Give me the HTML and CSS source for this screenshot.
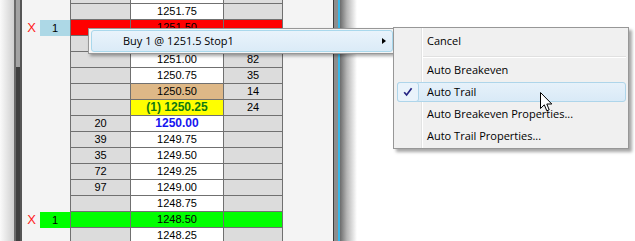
FILE: index.html
```html
<!DOCTYPE html>
<html>
<head>
<meta charset="utf-8">
<link rel="stylesheet" href="styles.css">
</head>
<body>
<div class="screen">
  <div class="lshadow"></div>
  <div class="lframe"><div class="lf lf-a"></div><div class="lf lf-b"></div><div class="lf lf-c"></div></div>
  <div class="panel">
    <div class="ladder">
      <div class="row"><span class="x"></span><span class="q"></span><span class="c c1"></span><span class="c c2"></span><span class="c c3"></span></div>
      <div class="row"><span class="x"></span><span class="q"></span><span class="c c1"></span><span class="c c2">1251.75</span><span class="c c3"></span></div>
      <div class="row red"><span class="x">X</span><span class="q q-blue">1</span><span class="c c1"></span><span class="c c2">1251.50</span><span class="c c3"></span></div>
      <div class="row"><span class="x"></span><span class="q"></span><span class="c c1"></span><span class="c c2"></span><span class="c c3"></span></div>
      <div class="row"><span class="x"></span><span class="q"></span><span class="c c1"></span><span class="c c2">1251.00</span><span class="c c3">82</span></div>
      <div class="row"><span class="x"></span><span class="q"></span><span class="c c1"></span><span class="c c2">1250.75</span><span class="c c3">35</span></div>
      <div class="row"><span class="x"></span><span class="q"></span><span class="c c1"></span><span class="c c2 tan">1250.50</span><span class="c c3">14</span></div>
      <div class="row"><span class="x"></span><span class="q"></span><span class="c c1"></span><span class="c c2 last">(1) 1250.25</span><span class="c c3">24</span></div>
      <div class="row"><span class="x"></span><span class="q"></span><span class="c c1">20</span><span class="c c2 cur">1250.00</span><span class="c c3"></span></div>
      <div class="row"><span class="x"></span><span class="q"></span><span class="c c1">39</span><span class="c c2">1249.75</span><span class="c c3"></span></div>
      <div class="row"><span class="x"></span><span class="q"></span><span class="c c1">35</span><span class="c c2">1249.50</span><span class="c c3"></span></div>
      <div class="row"><span class="x"></span><span class="q"></span><span class="c c1">72</span><span class="c c2">1249.25</span><span class="c c3"></span></div>
      <div class="row"><span class="x"></span><span class="q"></span><span class="c c1">97</span><span class="c c2">1249.00</span><span class="c c3"></span></div>
      <div class="row"><span class="x"></span><span class="q"></span><span class="c c1"></span><span class="c c2">1248.75</span><span class="c c3"></span></div>
      <div class="row green"><span class="x">X</span><span class="q q-green">1</span><span class="c c1"></span><span class="c c2">1248.50</span><span class="c c3"></span></div>
      <div class="row"><span class="x"></span><span class="q"></span><span class="c c1"></span><span class="c c2">1248.25</span><span class="c c3"></span></div>
    </div>
  </div>
  <div class="rframe"><div class="rf rf-a"></div><div class="rf rf-b"></div><div class="rf rf-c"></div></div>
  <div class="rshadow"></div>
  <div class="rest"></div>
</div>

<div class="menu1">
  <div class="m1-item"><span class="m1-text">Buy 1 @ 1251.5 Stop1</span><span class="arrow"></span></div>
</div>

<div class="menu2">
  <div class="m2-item"><span class="m2-text">Cancel</span></div>
  <div class="m2-sep"></div>
  <div class="m2-item"><span class="m2-text">Auto Breakeven</span></div>
  <div class="m2-item hot"><span class="check"><svg width="12" height="12" viewBox="0 0 12 12"><path d="M2.2 6.2 L4.6 9 L9.6 2.2" fill="none" stroke="#242482" stroke-width="1.7" stroke-linejoin="miter"/></svg></span><span class="m2-text">Auto Trail</span></div>
  <div class="m2-item"><span class="m2-text">Auto Breakeven Properties...</span></div>
  <div class="m2-item"><span class="m2-text">Auto Trail Properties...</span></div>
</div>

<svg class="cursor" width="14" height="22" viewBox="0 0 14 22"><path d="M0.5 0.5 L0.5 16.5 L4.3 12.8 L6.8 18.8 L9.2 17.8 L6.8 12 L11.8 12 Z" fill="#fff" stroke="#000" stroke-width="1" stroke-linejoin="miter"/></svg>
</body>
</html>
```

FILE: styles.css
```css
html, body {
  margin: 0;
  padding: 0;
  width: 635px;
  height: 241px;
  overflow: hidden;
  background: #fff;
}
body {
  position: relative;
  font-family: "Liberation Sans", Arial, sans-serif;
}
.screen {
  display: flex;
  height: 241px;
}
.lshadow {
  width: 14px;
  background: linear-gradient(to right, #fafafa, #cfcfcf);
}
.lframe {
  display: flex;
  width: 8px;
}
.lf-a { width: 2px; background: #6a6a6a; }
.lf-b { width: 4px; background: linear-gradient(#a3a3a3 0 67px, #3f3f3f 67px); }
.lf-c { width: 2px; background: #555; }

.panel {
  width: 311px;
  background: #f4f4f4;
  overflow: hidden;
}
.ladder {
  margin-top: -12px;
  display: flex;
  flex-direction: column;
}
.row {
  display: flex;
  height: 16px;
  font-size: 11px;
  line-height: 15px;
  color: #000;
}
.x {
  width: 18px;
  color: #ff1a1a;
  font-size: 13px;
  line-height: 16px;
  text-align: right;
  padding-right: 4px;
  box-sizing: border-box;
}
.q {
  width: 30px;
  text-align: center;
  line-height: 16px;
}
.q-blue { background: #add8e6; }
.q-green { background: #00ff00; }
.c {
  box-sizing: border-box;
  border-left: 1px solid #707070;
  border-bottom: 1px solid #707070;
  text-align: center;
  height: 16px;
}
.c1 { width: 60px; background: #dcdcdc; }
.c2 { width: 93px; background: #fff; }
.c3 { width: 60px; background: #dcdcdc; border-right: 1px solid #707070; }
.red .c { background: #ff0000; }
.green .c { background: #00ff00; }
.tan { background: #deb887; }
.last { background: #ffff00; color: #0e7a12; font-weight: bold; font-size: 12px; }
.cur { color: #1515f0; font-weight: bold; font-size: 12px; }

.rframe {
  display: flex;
  width: 7px;
}
.rf-a { width: 1px; background: #3c3c3c; }
.rf-b { width: 4px; background: #8e8e8e; }
.rf-c { width: 2px; background: #38b8ea; }
.rshadow {
  width: 17px;
  background: linear-gradient(to right, #6c6c6c, #b5b5b5 40%, #fff);
}
.rest {
  flex: 1;
  background: #fff;
}

.menu1 {
  position: absolute;
  left: 88px;
  top: 28px;
  width: 308px;
  height: 26px;
  box-sizing: border-box;
  border: 1px solid #979797;
  background: #f5f5f5;
  padding: 1px 2px;
  box-shadow: 2px 2px 3px rgba(0,0,0,0.35);
  font-family: "Open Sans", "Noto Sans", sans-serif;
  font-size: 11px;
  z-index: 2;
}
.m1-item {
  height: 22px;
  box-sizing: border-box;
  border: 1px solid #a9d8ec;
  border-radius: 3px;
  background: linear-gradient(#e9f3fb, #dbebf7);
  display: flex;
  align-items: center;
  justify-content: space-between;
}
.m1-text {
  padding-left: 31px;
  line-height: 20px;
}
.arrow {
  width: 0;
  height: 0;
  border-left: 4px solid #000;
  border-top: 3.5px solid transparent;
  border-bottom: 3.5px solid transparent;
  margin-right: 6px;
}

.menu2 {
  position: absolute;
  left: 393px;
  top: 27px;
  width: 236px;
  height: 122px;
  box-sizing: border-box;
  border: 1px solid #979797;
  padding: 2px 2px 1px 3px;
  background: linear-gradient(to right, #f0f0f0 27px, #e2e3e3 27px 28px, #ffffff 28px 29px, #f0f0f0 29px);
  box-shadow: 3px 3px 3px rgba(0,0,0,0.35);
  font-family: "Open Sans", "Noto Sans", sans-serif;
  font-size: 11px;
  color: #000;
  display: flex;
  flex-direction: column;
  z-index: 3;
}
.m2-item {
  height: 20px;
  margin: 1px 0;
  box-sizing: border-box;
  border: 1px solid transparent;
  border-radius: 3px;
  display: flex;
  align-items: center;
  position: relative;
}
.m2-text {
  padding-left: 29px;
  line-height: 18px;
}
.m2-sep {
  height: 8px;
  margin-left: 26px;
  background: linear-gradient(#0000 0 4px, #e0e0e0 4px 5px, #fff 5px 6px, #0000 6px);
}
.hot {
  border-color: #aed5ea;
  background: linear-gradient(#e6f1fa, #d9eaf7);
}
.check {
  position: absolute;
  left: -1px;
  top: -1px;
  width: 22px;
  height: 20px;
  box-sizing: border-box;
  border: 1px solid #aed5ea;
  border-radius: 3px;
  background: #e9f3fb;
  display: flex;
  align-items: center;
  justify-content: center;
}
.check svg { display: block; }

.cursor {
  position: absolute;
  left: 540px;
  top: 92px;
  z-index: 5;
}
```
